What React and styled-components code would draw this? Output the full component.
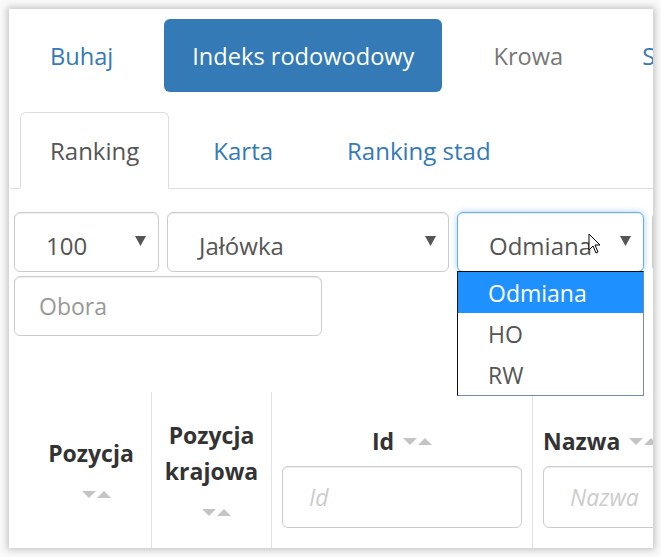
import styled, { createGlobalStyle } from "styled-components";

const GlobalStyle = createGlobalStyle`
  html, body {
    margin: 0;
    padding: 0;
    background: #fafafa;
    font-family: "Open Sans", "Liberation Sans", sans-serif;
  }
`;

const Panel = styled.div`
  width: 644px;
  height: 539px;
  margin: 9px;
  background: #ffffff;
  box-shadow: 0 0 7px 2px rgba(0, 0, 0, 0.22);
  overflow: hidden;
  position: relative;
`;

const Nav = styled.ul`
  display: flex;
  gap: 23px;
  margin: 0;
  padding: 10px 0 0 13px;
  list-style: none;
  white-space: nowrap;
`;

const Pill = styled.li`
  height: 73px;
  display: flex;
  align-items: center;
  padding: 0 28px;
  border-radius: 6px;
  font-size: 23.6px;
  color: ${(p) => (p.$active ? "#ffffff" : p.$muted ? "#777777" : "#337ab7")};
  background: ${(p) => (p.$active ? "#337ab7" : "transparent")};
  flex-shrink: 0;
`;

const TabBar = styled.ul`
  display: flex;
  margin: 20px 0 0 1px;
  padding: 0 0 0 10px;
  list-style: none;
  border-bottom: 1px solid #dddddd;
`;

const Tab = styled.li`
  height: 77px;
  box-sizing: border-box;
  display: flex;
  align-items: center;
  padding: 0 29px;
  margin-right: 14px;
  margin-bottom: -1px;
  font-size: 24px;
  color: ${(p) => (p.$active ? "#555555" : "#337ab7")};
  border: 1px solid ${(p) => (p.$active ? "#dddddd" : "transparent")};
  border-bottom-color: ${(p) => (p.$active ? "#ffffff" : "transparent")};
  border-radius: 6px 6px 0 0;
  background: ${(p) => (p.$active ? "#ffffff" : "transparent")};
`;

const Filters = styled.div`
  margin-top: 23px;
  padding-left: 5px;
`;

const FilterRow = styled.div`
  display: flex;
  gap: 8px;
  margin-top: ${(p) => p.$gap || 0}px;
`;

const Select = styled.div`
  position: relative;
  width: ${(p) => p.$w}px;
  flex-shrink: 0;
  height: 60px;
  box-sizing: border-box;
  display: flex;
  align-items: center;
  justify-content: space-between;
  padding: 6px 12px 0 31px;
  font-size: 24px;
  color: #555555;
  border: 1px solid ${(p) => (p.$focused ? "#66afe9" : "#cccccc")};
  border-radius: 6px;
  box-shadow: ${(p) =>
    p.$focused
      ? "inset 0 1px 1px rgba(0,0,0,.075), 0 0 6px rgba(102,175,233,.6)"
      : "inset 0 1px 1px rgba(0,0,0,.075)"};
  background: #ffffff;
`;

const Caret = styled.svg`
  width: 11px;
  height: 10px;
  margin-bottom: 8px;
  fill: #555555;
`;

const Options = styled.ul`
  position: absolute;
  top: 100%;
  left: -1px;
  width: calc(100% + 2px);
  box-sizing: border-box;
  margin: 0;
  padding: 0;
  list-style: none;
  background: #ffffff;
  border: 1px solid #7089b5;
  border-top-color: #111111;
  border-left-color: #111111;
  z-index: 10;
`;

const Option = styled.li`
  height: 41px;
  display: flex;
  align-items: center;
  padding-left: 30px;
  font-size: 23px;
  color: ${(p) => (p.$selected ? "#ffffff" : "#555555")};
  background: ${(p) => (p.$selected ? "#1e90ff" : "#ffffff")};
`;

const Cursor = styled.svg`
  position: absolute;
  left: 130px;
  top: 20px;
  width: 13px;
  height: 21px;
`;

const TextInput = styled.input`
  width: ${(p) => (p.$w ? `${p.$w}px` : "100%")};
  height: ${(p) => p.$h || 60}px;
  margin-top: ${(p) => p.$mt || 0}px;
  box-sizing: border-box;
  border: 1px solid #cccccc;
  border-radius: 6px;
  padding: 0 0 0 ${(p) => p.$pad || 24}px;
  font-family: inherit;
  font-size: 23px;
  font-style: ${(p) => (p.$italic ? "italic" : "normal")};
  color: #555555;
  outline: none;
  box-shadow: inset 0 1px 1px rgba(0, 0, 0, 0.075);
  &::placeholder {
    color: ${(p) => (p.$italic ? "#cccccc" : "#999999")};
  }
`;

const Table = styled.div`
  margin-top: 56px;
  display: grid;
  grid-template-columns: 142px 120px 261px 300px;
  height: 200px;
`;

const HeadCell = styled.div`
  box-sizing: border-box;
  border-left: ${(p) => (p.$first ? "none" : "1px solid #e2e2e2")};
  padding: ${(p) => p.$top}px 10px 0 ${(p) => p.$left || 10}px;
  display: flex;
  flex-direction: column;
  align-items: ${(p) => (p.$start ? "flex-start" : "center")};
  font-size: 23px;
  font-weight: 700;
  line-height: 36px;
  color: #333333;
  text-align: center;
  white-space: nowrap;
`;

const Title = styled.div`
  display: flex;
  align-items: center;
  gap: 9px;
`;

const SortIcon = styled.svg`
  width: 29px;
  height: 7px;
  fill: #c4c4c4;
  margin-top: ${(p) => p.$mt || 0}px;
  margin-left: ${(p) => p.$ml || 0}px;
`;

function Sort(props) {
  return (
    <SortIcon viewBox="0 0 29 7" {...props}>
      <polygon points="0,0 14,0 7,7" />
      <polygon points="15,7 29,7 22,0" />
    </SortIcon>
  );
}

function Arrow() {
  return (
    <Caret viewBox="0 0 11 10">
      <polygon points="0,0 11,0 5.5,10" />
    </Caret>
  );
}

export default function App() {
  return (
    <>
      <GlobalStyle />
      <Panel>
        <Nav>
          <Pill>Buhaj</Pill>
          <Pill $active>Indeks rodowodowy</Pill>
          <Pill $muted>Krowa</Pill>
          <Pill>Stado</Pill>
        </Nav>

        <TabBar>
          <Tab $active>Ranking</Tab>
          <Tab>Karta</Tab>
          <Tab>Ranking stad</Tab>
        </TabBar>

        <Filters>
          <FilterRow>
            <Select $w={145}>
              100 <Arrow />
            </Select>
            <Select $w={282}>
              Jałówka <Arrow />
            </Select>
            <Select $w={187} $focused>
              Odmiana <Arrow />
              <Cursor viewBox="0 0 13 21">
                <path
                  d="M1 1 L1 17 L5 13 L8 20 L10 19 L7 12 L12 12 Z"
                  fill="#ffffff"
                  stroke="#000000"
                  strokeWidth="1"
                  strokeLinejoin="round"
                />
              </Cursor>
              <Options>
                <Option $selected>Odmiana</Option>
                <Option>HO</Option>
                <Option>RW</Option>
              </Options>
            </Select>
            <Select $w={180}>
              Rok <Arrow />
            </Select>
          </FilterRow>
          <FilterRow $gap={4}>
            <TextInput $w={308} placeholder="Obora" />
          </FilterRow>
        </Filters>

        <Table>
          <HeadCell $first $top={43} $left={32}>
            <div>Pozycja</div>
            <Sort $mt={20} $ml={10} />
          </HeadCell>
          <HeadCell $top={25}>
            <div>
              Pozycja
              <br />
              krajowa
            </div>
            <Sort $mt={20} $ml={10} />
          </HeadCell>
          <HeadCell $top={31}>
            <Title>
              Id <Sort />
            </Title>
            <TextInput $h={62} $pad={26} $mt={7} $italic placeholder="Id" />
          </HeadCell>
          <HeadCell $top={31} $start>
            <Title>
              Nazwa <Sort />
            </Title>
            <TextInput $h={62} $pad={26} $mt={7} $italic placeholder="Nazwa" />
          </HeadCell>
        </Table>
      </Panel>
    </>
  );
}
